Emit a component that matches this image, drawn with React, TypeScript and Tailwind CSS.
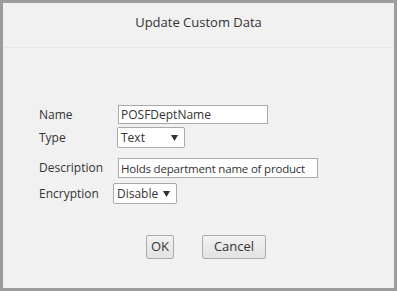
const font = { fontFamily: '"Open Sans", "Noto Sans", sans-serif' };

function Arrow() {
  return (
    <svg width="7" height="6" viewBox="0 0 7 6" className="shrink-0">
      <path d="M0 0 H7 L3.5 6 Z" fill="#333" />
    </svg>
  );
}

function Select({ value, width }: { value: string; width: string }) {
  return (
    <div
      className={`flex h-[21px] items-center justify-between rounded-[2px] border border-[#a9a9a9] bg-white pl-[3px] pr-[6px] text-[12px] text-[#333] ${width}`}
    >
      <span>{value}</span>
      <Arrow />
    </div>
  );
}

export default function App() {
  return (
    <div
      className="flex h-[291px] w-[397px] flex-col border-[3px] border-[#9c9c9c] bg-[#f1f1f1] text-[#333]"
      style={font}
    >
      <div className="flex h-[45px] items-center justify-center border-b border-[#e6e6e6] pb-[5px] text-[13px]">
        Update Custom Data
      </div>

      <div className="flex flex-col pl-[36px] pt-[57px] text-[12px]">
        <div className="flex items-center">
          <span className="w-[79px]">Name</span>
          <input
            readOnly
            value="POSFDeptName"
            className="h-[19px] w-[150px] border border-[#a9a9a9] bg-white px-[2px] text-[12px] text-[#333] outline-none"
            style={font}
          />
        </div>

        <div className="mt-[3px] flex items-center">
          <span className="w-[78px]">Type</span>
          <Select value="Text" width="w-[68px]" />
        </div>

        <div className="mt-[10px] flex items-center">
          <span className="w-[79px]">Description</span>
          <input
            readOnly
            value="Holds department name of product"
            className="h-[20px] w-[200px] border border-[#a9a9a9] bg-white px-[2px] text-[11.5px] tracking-[-0.2px] text-[#333] outline-none"
            style={font}
          />
        </div>

        <div className="mt-[5px] flex items-center">
          <span className="w-[74px]">Encryption</span>
          <Select value="Disable" width="w-[64px]" />
        </div>
      </div>

      <div className="mt-[31px] flex justify-center gap-[28px] pl-[15px]">
        <button className="h-[24px] w-[28px] rounded-[2px] border border-[#acacac] bg-gradient-to-b from-[#f2f2f2] to-[#e2e2e2] text-[13px] text-[#333]">
          OK
        </button>
        <button className="h-[24px] w-[64px] rounded-[2px] border border-[#acacac] bg-gradient-to-b from-[#f2f2f2] to-[#e2e2e2] text-[13px] text-[#333]">
          Cancel
        </button>
      </div>
    </div>
  );
}
